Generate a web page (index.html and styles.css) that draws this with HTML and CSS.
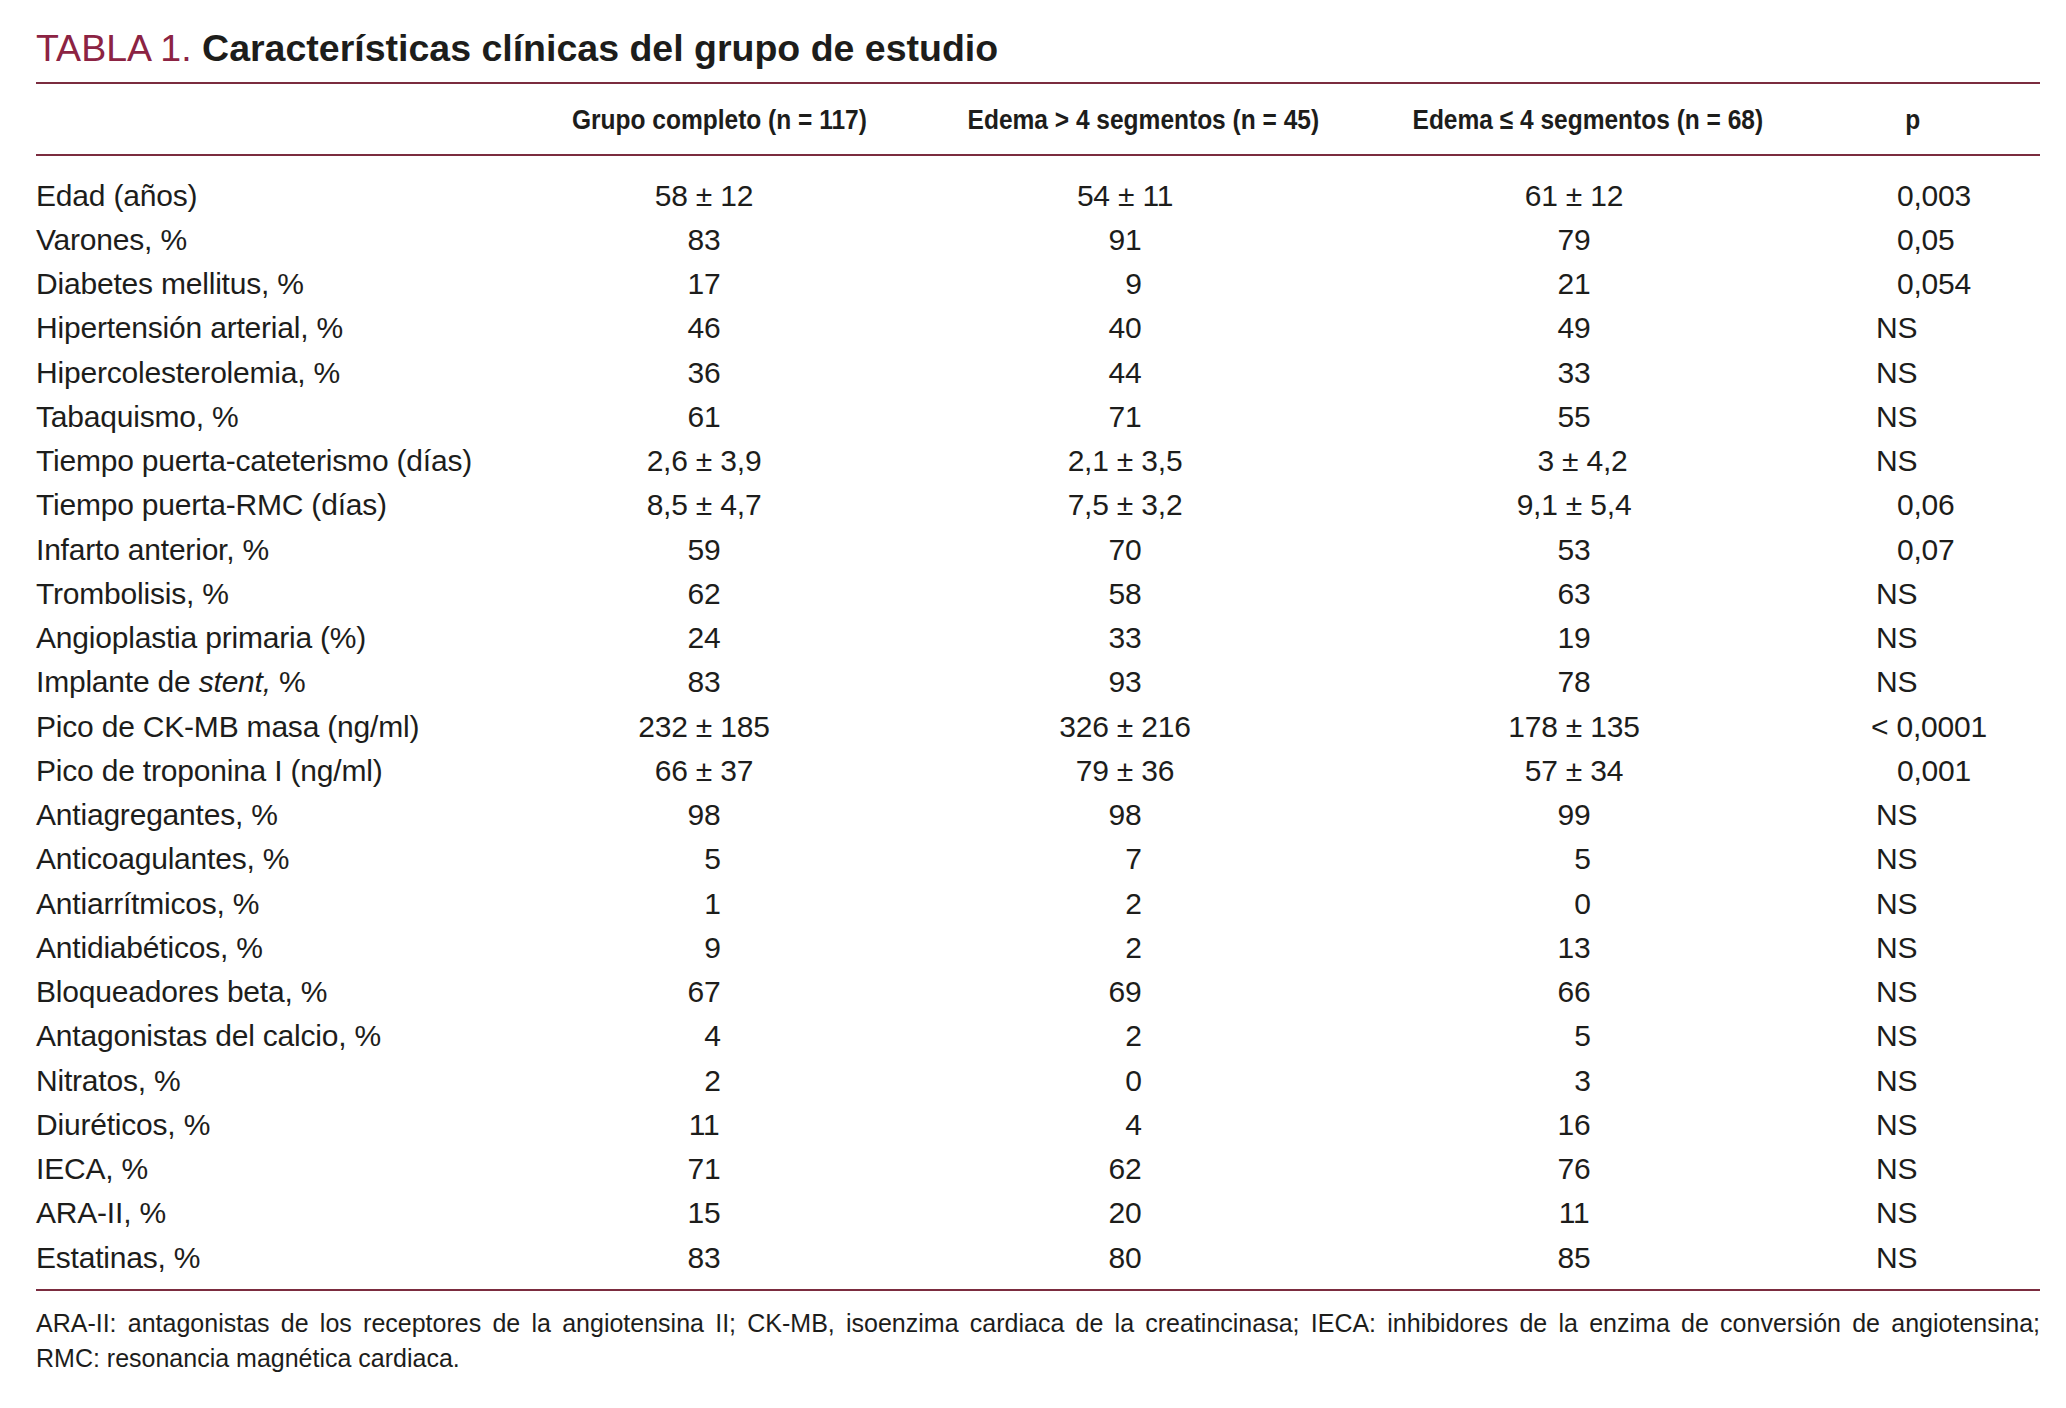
FILE: index.html
```html
<!DOCTYPE html>
<html lang="es">
<head>
<meta charset="utf-8">
<title>Tabla 1</title>
<link rel="stylesheet" href="styles.css">
</head>
<body>
<div class="page">
  <h1 class="title"><span class="label">TABLA 1.</span> <span class="name">Características clínicas del grupo de estudio</span></h1>
  <table class="data">
    <colgroup>
      <col class="c-label"><col class="c-1"><col class="c-2"><col class="c-3"><col class="c-p">
    </colgroup>
    <thead>
      <tr>
        <th class="h-label"></th>
        <th class="h-1"><span class="hd">Grupo completo (n = 117)</span></th>
        <th class="h-2"><span class="hd">Edema &gt; 4 segmentos (n = 45)</span></th>
        <th class="h-3"><span class="hd">Edema ≤ 4 segmentos (n = 68)</span></th>
        <th class="h-p"><span class="hd">p</span></th>
      </tr>
    </thead>
    <tbody>
      <tr><td>Edad (años)</td><td>58 ± 12</td><td>54 ± 11</td><td>61 ± 12</td><td class="num">0,003</td></tr>
      <tr><td>Varones, %</td><td>83</td><td>91</td><td>79</td><td class="num">0,05</td></tr>
      <tr><td>Diabetes mellitus, %</td><td>17</td><td class="one">9</td><td>21</td><td class="num">0,054</td></tr>
      <tr><td>Hipertensión arterial, %</td><td>46</td><td>40</td><td>49</td><td class="ns">NS</td></tr>
      <tr><td>Hipercolesterolemia, %</td><td>36</td><td>44</td><td>33</td><td class="ns">NS</td></tr>
      <tr><td>Tabaquismo, %</td><td>61</td><td>71</td><td>55</td><td class="ns">NS</td></tr>
      <tr><td>Tiempo puerta-cateterismo (días)</td><td>2,6 ± 3,9</td><td>2,1 ± 3,5</td><td class="one">3 ± 4,2</td><td class="ns">NS</td></tr>
      <tr><td>Tiempo puerta-RMC (días)</td><td>8,5 ± 4,7</td><td>7,5 ± 3,2</td><td>9,1 ± 5,4</td><td class="num">0,06</td></tr>
      <tr><td>Infarto anterior, %</td><td>59</td><td>70</td><td>53</td><td class="num">0,07</td></tr>
      <tr><td>Trombolisis, %</td><td>62</td><td>58</td><td>63</td><td class="ns">NS</td></tr>
      <tr><td>Angioplastia primaria (%)</td><td>24</td><td>33</td><td>19</td><td class="ns">NS</td></tr>
      <tr><td>Implante de <i>stent,</i> %</td><td>83</td><td>93</td><td>78</td><td class="ns">NS</td></tr>
      <tr><td>Pico de CK-MB masa (ng/ml)</td><td>232 ± 185</td><td>326 ± 216</td><td>178 ± 135</td><td class="lt">&lt; 0,0001</td></tr>
      <tr><td>Pico de troponina I (ng/ml)</td><td>66 ± 37</td><td>79 ± 36</td><td>57 ± 34</td><td class="num">0,001</td></tr>
      <tr><td>Antiagregantes, %</td><td>98</td><td>98</td><td>99</td><td class="ns">NS</td></tr>
      <tr><td>Anticoagulantes, %</td><td class="one">5</td><td class="one">7</td><td class="one">5</td><td class="ns">NS</td></tr>
      <tr><td>Antiarrítmicos, %</td><td class="one">1</td><td class="one">2</td><td class="one">0</td><td class="ns">NS</td></tr>
      <tr><td>Antidiabéticos, %</td><td class="one">9</td><td class="one">2</td><td>13</td><td class="ns">NS</td></tr>
      <tr><td>Bloqueadores beta, %</td><td>67</td><td>69</td><td>66</td><td class="ns">NS</td></tr>
      <tr><td>Antagonistas del calcio, %</td><td class="one">4</td><td class="one">2</td><td class="one">5</td><td class="ns">NS</td></tr>
      <tr><td>Nitratos, %</td><td class="one">2</td><td class="one">0</td><td class="one">3</td><td class="ns">NS</td></tr>
      <tr><td>Diuréticos, %</td><td>11</td><td class="one">4</td><td>16</td><td class="ns">NS</td></tr>
      <tr><td>IECA, %</td><td>71</td><td>62</td><td>76</td><td class="ns">NS</td></tr>
      <tr><td>ARA-II, %</td><td>15</td><td>20</td><td>11</td><td class="ns">NS</td></tr>
      <tr><td>Estatinas, %</td><td>83</td><td>80</td><td>85</td><td class="ns">NS</td></tr>
    </tbody>
  </table>
  <div class="notes">
    <p class="note-line first">ARA-II: antagonistas de los receptores de la angiotensina II; CK-MB, isoenzima cardiaca de la creatincinasa; IECA: inhibidores de la enzima de conversión de angiotensina;</p>
    <p class="note-line">RMC: resonancia magnética cardiaca.</p>
  </div>
</div>
</body>
</html>
```
FILE: styles.css
```css
html, body {
  margin: 0;
  padding: 0;
  background: #ffffff;
}

body {
  font-family: "Liberation Sans", Arial, sans-serif;
  color: #1d1d1b;
}

.page {
  width: 2004px;
  padding: 26px 0 0 36px;
}

.title {
  margin: 0;
  font-size: 37.5px;
  line-height: 44px;
  font-weight: normal;
  white-space: nowrap;
}

.title .label {
  color: #8c2343;
  font-weight: normal;
}

.title .name {
  font-weight: bold;
  color: #1d1d1b;
}

.data {
  margin-top: 12px;
  width: 2004px;
  table-layout: fixed;
  border-collapse: separate;
  border-spacing: 0;
}

.c-label { width: 444px; }
.c-1 { width: 448px; }
.c-2 { width: 394px; }
.c-3 { width: 504px; }
.c-p { width: 214px; }

.data th {
  font-weight: bold;
  font-size: 28.5px;
  line-height: 70px;
  height: 70px;
  padding: 0;
  border-top: 2px solid #7b2c3f;
  border-bottom: 2px solid #7b2c3f;
  white-space: nowrap;
  text-align: center;
}

.data th .hd {
  display: inline-block;
  margin: 0 -40px;
  transform: scaleX(0.86);
  transform-origin: center;
}

.data th.h-1 { padding-left: 30px; }
.data th.h-2 { padding-left: 36px; }
.data th.h-3 { padding-left: 28px; }
.data th.h-p { text-align: left; padding-left: 78px; }
.data th.h-p .hd { margin: 0; }

.data td {
  font-size: 30px;
  letter-spacing: -0.2px;
  line-height: 44.25px;
  padding: 0;
  text-align: center;
  white-space: nowrap;
}

.data td:first-child {
  text-align: left;
}

.data td.one { padding-left: 17px; }
.data td.ns { text-align: left; padding-left: 50px; }
.data td.num { text-align: left; padding-left: 71px; }
.data td.lt { text-align: left; padding-left: 45px; }

.data tbody tr:first-child td { padding-top: 17.5px; }
.data tbody tr:last-child td {
  padding-bottom: 9.5px;
  border-bottom: 2px solid #7b2c3f;
}

.notes {
  margin-top: 15px;
  font-size: 25px;
  line-height: 35px;
}

.note-line {
  margin: 0;
}

.note-line.first {
  text-align: justify;
  text-align-last: justify;
}
```
